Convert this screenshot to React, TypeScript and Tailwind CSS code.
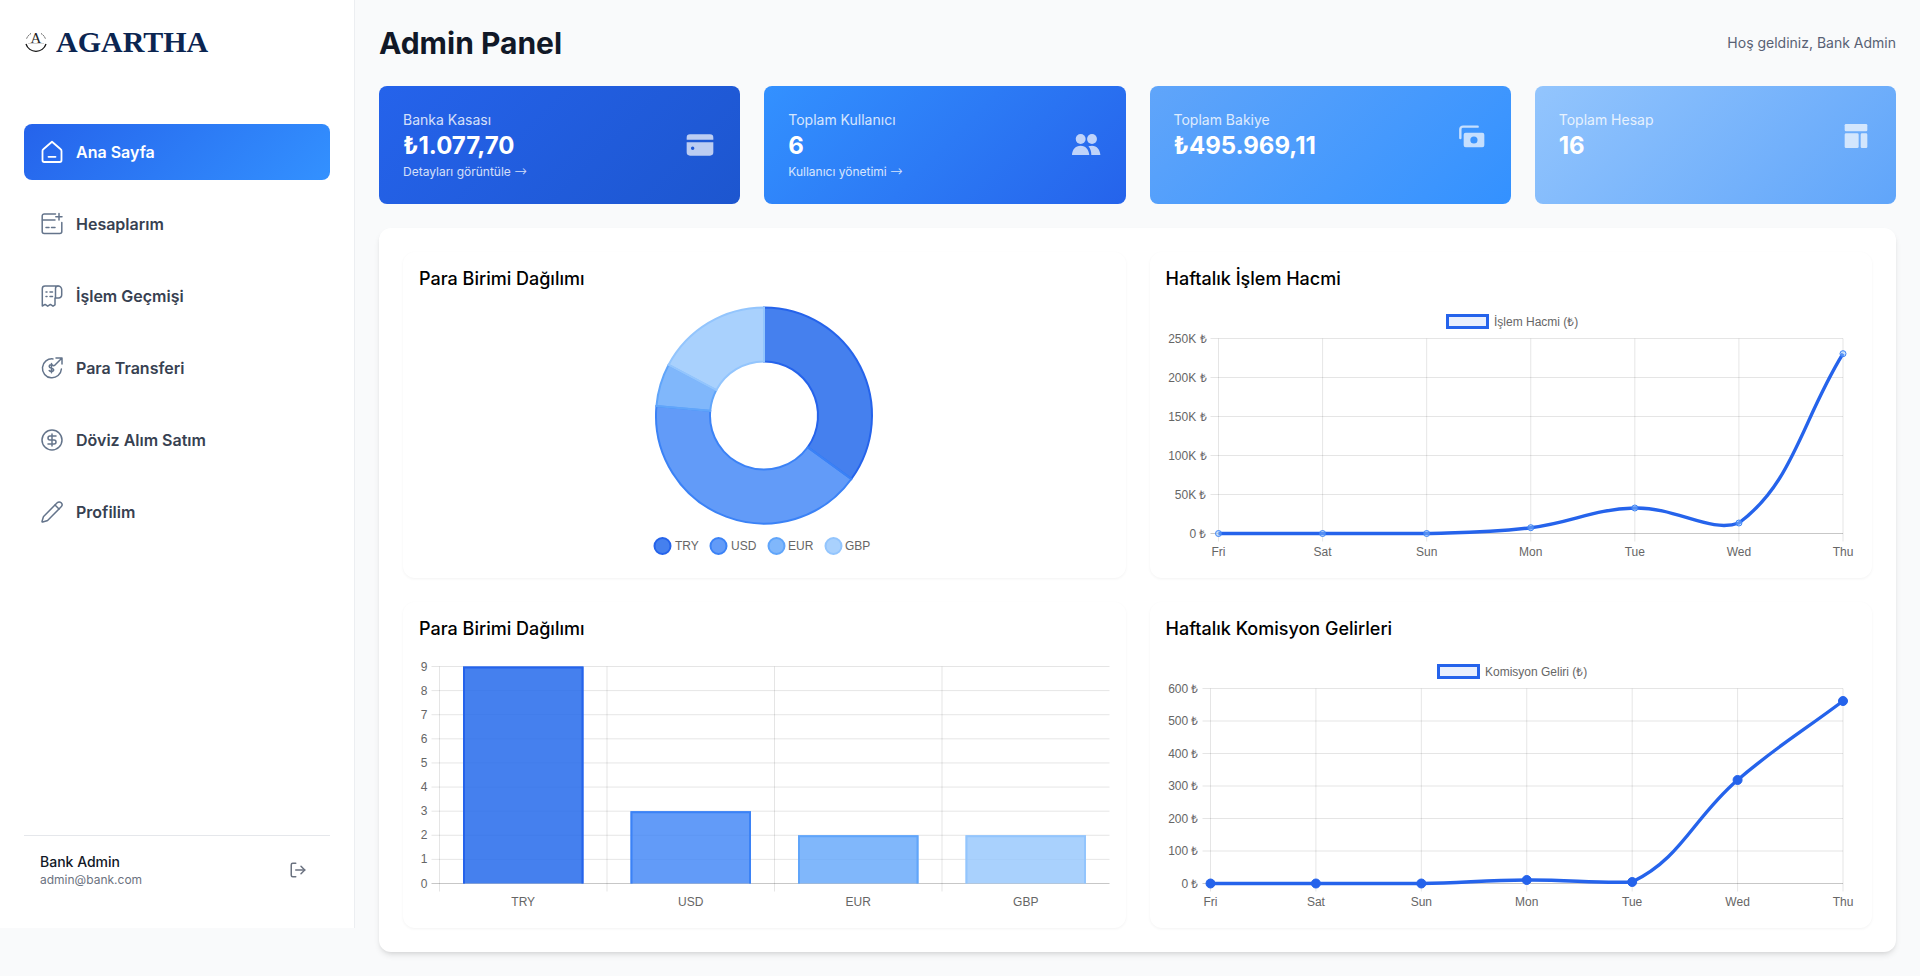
import React from "react";
import { CircleDollarSign, Pencil, LogOut } from "lucide-react";

type P = { x: number; y: number };

function spline(pts: P[], top: number, bottom: number, t = 0.4) {
  const cap = (v: number) => Math.min(bottom, Math.max(top, v));
  let d = `M${pts[0].x} ${pts[0].y}`;
  const ctrl = pts.map((p, i) => {
    const a = pts[i - 1] ?? p;
    const b = pts[i + 1] ?? p;
    const d01 = Math.hypot(p.x - a.x, p.y - a.y);
    const d12 = Math.hypot(b.x - p.x, b.y - p.y);
    const tot = d01 + d12 || 1;
    const fa = (t * d01) / tot;
    const fb = (t * d12) / tot;
    return {
      prev: { x: p.x - fa * (b.x - a.x), y: cap(p.y - fa * (b.y - a.y)) },
      next: { x: p.x + fb * (b.x - a.x), y: cap(p.y + fb * (b.y - a.y)) },
    };
  });
  for (let i = 1; i < pts.length; i++) {
    const c1 = ctrl[i - 1].next;
    const c2 = ctrl[i].prev;
    d += ` C${c1.x} ${c1.y} ${c2.x} ${c2.y} ${pts[i].x} ${pts[i].y}`;
  }
  return d;
}

const GRID = "rgba(0,0,0,0.1)";
const LABEL = "#666666";
const FONT = "'Liberation Sans', Arial, sans-serif";

function ChartText(props: React.SVGProps<SVGTextElement>) {
  return <text fontFamily={FONT} fontSize={12} fill={LABEL} dominantBaseline="central" {...props} />;
}

const days = ["Fri", "Sat", "Sun", "Mon", "Tue", "Wed", "Thu"];

function LineChart({
  legend,
  legendX,
  left,
  ticks,
  ys,
  pointR,
  hollow,
}: {
  legend: string;
  legendX: number;
  left: number;
  ticks: string[];
  ys: number[];
  pointR: number;
  hollow: boolean;
}) {
  const right = 677;
  const top = 32.5;
  const bottom = 227.5;
  const n = ticks.length - 1;
  const step = (right - left) / 6;
  const pts = ys.map((y, i) => ({ x: left + i * step, y }));
  return (
    <svg width={690} height={256} className="block overflow-visible">
      <rect x={legendX + 1.5} y={9.5} width={40} height={12} fill="rgba(37,99,235,0.1)" stroke="#2563eb" strokeWidth={3} />
      <ChartText x={legendX + 48} y={16}>
        {legend}
      </ChartText>
      {ticks.map((t, i) => {
        const y = top + ((bottom - top) * i) / n;
        return (
          <g key={t}>
            <line x1={left - 8} x2={right} y1={y} y2={y} stroke={i === n ? "rgba(0,0,0,0.22)" : GRID} />
            <ChartText x={left - 12} y={y} textAnchor="end">
              {t}
            </ChartText>
          </g>
        );
      })}
      {days.map((d, i) => {
        const x = left + i * step;
        return (
          <g key={d}>
            <line x1={x} x2={x} y1={top} y2={bottom + 8} stroke={GRID} />
            <ChartText x={x} y={246} textAnchor="middle">
              {d}
            </ChartText>
          </g>
        );
      })}
      <path d={spline(pts, top, bottom)} fill="none" stroke="#2563eb" strokeWidth={3.4} />
      {pts.map((p, i) => (
        <circle
          key={i}
          cx={p.x}
          cy={p.y}
          r={pointR}
          fill={hollow ? "rgba(147,197,253,0.45)" : "#2563eb"}
          stroke={hollow ? "#3b82f6" : "#2563eb"}
          strokeWidth={1}
        />
      ))}
    </svg>
  );
}

function polar(a: number, r: number) {
  const rad = ((a - 90) * Math.PI) / 180;
  return { x: 345 + r * Math.cos(rad), y: 109.5 + r * Math.sin(rad) };
}

function seg(a0: number, a1: number, R: number, r: number) {
  const large = a1 - a0 > 180 ? 1 : 0;
  const p0 = polar(a0, R);
  const p1 = polar(a1, R);
  const p2 = polar(a1, r);
  const p3 = polar(a0, r);
  return `M${p0.x} ${p0.y} A${R} ${R} 0 ${large} 1 ${p1.x} ${p1.y} L${p2.x} ${p2.y} A${r} ${r} 0 ${large} 0 ${p3.x} ${p3.y} Z`;
}

const series = [
  { name: "TRY", fill: "rgba(37,106,235,0.85)", border: "#2563eb", from: 0, to: 126, cx: 243.5, tx: 256 },
  { name: "USD", fill: "rgba(59,130,246,0.8)", border: "#3b82f6", from: 126, to: 275, cx: 299.5, tx: 312 },
  { name: "EUR", fill: "rgba(96,165,250,0.8)", border: "#60a5fa", from: 275, to: 298, cx: 357.5, tx: 369 },
  { name: "GBP", fill: "rgba(147,197,253,0.8)", border: "#93c5fd", from: 298, to: 360, cx: 414.5, tx: 426 },
];

function Donut() {
  return (
    <svg width={690} height={256} className="block overflow-visible">
      {series.map((s) => (
        <path key={s.name} d={seg(s.from, s.to, 108, 54)} fill={s.fill} stroke={s.border} strokeWidth={2} />
      ))}
      {series.map((s) => (
        <g key={s.name}>
          <circle cx={s.cx} cy={240} r={8} fill={s.fill} stroke={s.border} strokeWidth={2} />
          <ChartText x={s.tx} y={240}>
            {s.name}
          </ChartText>
        </g>
      ))}
    </svg>
  );
}

function BarChart() {
  const left = 20.5;
  const right = 690.5;
  const top = 10.5;
  const bottom = 227.5;
  const vals = [9, 3, 2, 2];
  const step = (right - left) / 4;
  const unit = (bottom - top) / 9;
  return (
    <svg width={690} height={256} className="block overflow-visible">
      {[9, 8, 7, 6, 5, 4, 3, 2, 1, 0].map((v) => {
        const y = bottom - v * unit;
        return (
          <g key={v}>
            <line x1={left - 8} x2={right} y1={y} y2={y} stroke={v === 0 ? "rgba(0,0,0,0.22)" : GRID} />
            <ChartText x={left - 12} y={y} textAnchor="end">
              {v}
            </ChartText>
          </g>
        );
      })}
      {[0, 1, 2, 3].map((i) => {
        const x = left + i * step;
        return <line key={i} x1={x} x2={x} y1={top} y2={bottom + 8} stroke={GRID} />;
      })}
      {series.map((s, i) => {
        const cx = left + (i + 0.5) * step;
        const h = vals[i] * unit;
        return (
          <g key={s.name}>
            <rect x={cx - 60.25} y={bottom - h} width={120.5} height={h} fill={s.fill} />
            <path
              d={`M${cx - 59.25} ${bottom} V${bottom - h + 1} H${cx + 59.25} V${bottom}`}
              fill="none"
              stroke={s.border}
              strokeWidth={2}
            />
            <ChartText x={cx} y={246} textAnchor="middle">
              {s.name}
            </ChartText>
          </g>
        );
      })}
    </svg>
  );
}

function Logo() {
  return (
    <svg width={24} height={24} viewBox="0 0 24 24" className="shrink-0">
      <path d="M7 3.5A10 10 0 0 0 2.5 9" fill="none" stroke="#333" strokeWidth={0.9} strokeDasharray="1.5 .7" />
      <path d="M17 3.5A10 10 0 0 1 21.5 9" fill="none" stroke="#333" strokeWidth={0.9} strokeDasharray="1.5 .7" />
      <path d="M2 14A10.5 10.5 0 0 0 22 14" fill="none" stroke="#111" strokeWidth={1.3} />
      <path d="M4.5 13.5h15" stroke="#888" strokeWidth={0.8} strokeDasharray="1 1" />
      <text x={12} y={13} textAnchor="middle" fontSize={15} fontFamily="'Liberation Serif', serif" fill="#222">
        A
      </text>
    </svg>
  );
}

const s = { fill: "none", stroke: "currentColor", strokeWidth: 1.5, strokeLinecap: "round" as const, strokeLinejoin: "round" as const };

function HomeIcon() {
  return (
    <svg width={24} height={24} viewBox="0 0 24 24" {...s} strokeWidth={1.8}>
      <path d="M12 1.8 3.300 9.300c-.5.4-.8 1-.8 1.600V20.300a1.700 1.700 0 0 0 1.700 1.700h15.600a1.700 1.700 0 0 0 1.700-1.700v-9.400c0-.6-.3-1.200-.8-1.600L12 1.800Z" />
      <path d="M8.500 16.800h7" />
    </svg>
  );
}
function CardPlus() {
  return (
    <svg width={24} height={24} viewBox="0 0 24 24" {...s}>
      <path d="M15.500 2H4.200a2 2 0 0 0-2 2v15.500a2 2 0 0 0 2 2h15.600a2 2 0 0 0 2-2V10.500" />
      <path d="M2.500 8H15" />
      <path d="M19 1.500v6.500M15.800 4.700h6.200" />
      <path d="M6 15.500h3M11.500 15.500h3.500" />
    </svg>
  );
}
function ReceiptIcon() {
  return (
    <svg width={24} height={24} viewBox="0 0 24 24" {...s}>
      <path d="M15.500 14V4.500a2.500 2.500 0 0 1 2.500-2.500H5a2.700 2.700 0 0 0-2.700 2.700V22l2.800-1.600 2.600 1.800 2.700-1.800 2.600 1.800 2-1.400V14" />
      <path d="M18 2a3.500 3.500 0 0 1 3.700 3.500V11a3 3 0 0 1-3 3h-3.200" />
      <path d="M6 8h1M10 8h2.500M6 12.500h1M10 12.500h2.500" />
    </svg>
  );
}
function TransferIcon() {
  return (
    <svg width={24} height={24} viewBox="0 0 24 24" {...s}>
      <path d="M13 2.900A9.500 9.500 0 1 0 21.400 13" />
      <path d="M14.500 9.500 21.500 2.500M16 2h6v6" />
      <path d="M13.400 9.700c-.5-.6-1.200-.9-2-.9-1.300 0-2.200.7-2.200 1.700 0 2.300 4.500 1.100 4.500 3.300 0 1-.9 1.700-2.300 1.700-.9 0-1.700-.4-2.200-1M11.500 7.500v9.300" />
    </svg>
  );
}

function CardIcon() {
  return (
    <svg width={32} height={32} viewBox="0 0 24 24" fill="currentColor">
      <path d="M2 6.500A2.500 2.500 0 0 1 4.500 4h15A2.500 2.500 0 0 1 22 6.500V8H2V6.500Z" />
      <path d="M2 10h20v7.500a2.500 2.500 0 0 1-2.500 2.500h-15A2.500 2.500 0 0 1 2 17.500V10Zm3.200 4.500a1.300 1.300 0 1 0 2.600 0 1.300 1.300 0 0 0-2.600 0Z" fillRule="evenodd" />
    </svg>
  );
}
function UsersIcon() {
  return (
    <svg width={32} height={32} viewBox="0 0 24 24" fill="currentColor">
      <circle cx={8} cy={7.500} r={3.700} />
      <circle cx={16.500} cy={7.500} r={3.700} />
      <path d="M1.500 19.500c0-4 2.500-7 6.500-7s6 3 6.500 7h-13Z" />
      <path d="M16 19.500c0-2.600-.7-4.800-2.200-6.500.8-.4 1.700-.5 2.700-.5 3.800 0 6 3 6.300 7H16Z" />
    </svg>
  );
}
function CashIcon() {
  return (
    <svg width={32} height={32} viewBox="0 0 24 24" fill="currentColor">
      <path d="M8 9.500h12.500a1.500 1.500 0 0 1 1.500 1.500v8a1.500 1.500 0 0 1-1.500 1.500H8A1.500 1.500 0 0 1 6.500 19v-8A1.500 1.500 0 0 1 8 9.500Zm6.200 2.800a2.700 2.700 0 1 0 0 5.400 2.700 2.700 0 0 0 0-5.400Z" fillRule="evenodd" />
      <path d="M4 13.500V7a2 2 0 0 1 2-2h11" fill="none" stroke="currentColor" strokeWidth={1.800} strokeLinecap="round" />
    </svg>
  );
}
function LayoutIcon() {
  return (
    <svg width={32} height={32} viewBox="0 0 24 24" fill="currentColor">
      <rect x={3.500} y={3} width={17} height={5.500} rx={1} />
      <rect x={3.500} y={10} width={10.500} height={11} rx={1} />
      <rect x={15.500} y={10} width={5} height={11} rx={1} />
    </svg>
  );
}

const nav = [
  { label: "Ana Sayfa", icon: <HomeIcon />, active: true },
  { label: "Hesaplarım", icon: <CardPlus /> },
  { label: "İşlem Geçmişi", icon: <ReceiptIcon /> },
  { label: "Para Transferi", icon: <TransferIcon /> },
  { label: "Döviz Alım Satım", icon: <CircleDollarSign size={24} strokeWidth={1.5} /> },
  { label: "Profilim", icon: <Pencil size={24} strokeWidth={1.5} /> },
];

function StatCard({
  label,
  value,
  link,
  icon,
  bg,
}: {
  label: string;
  value: string;
  link?: string;
  icon: React.ReactNode;
  bg: string;
}) {
  return (
    <div className={`rounded-lg p-6 text-white ${bg}`}>
      <div className="flex items-center justify-between">
        <div>
          <p className="text-sm leading-5 opacity-80">{label}</p>
          <p className="text-2xl leading-8 font-bold">{value}</p>
          {link && (
            <p className="text-xs leading-4 mt-0.5 opacity-80">
              {link} <span className="text-[15px] leading-none font-['DejaVu_Sans',sans-serif] font-extralight">→</span>
            </p>
          )}
        </div>
        <div className="opacity-70">{icon}</div>
      </div>
    </div>
  );
}

function ChartCard({ title, children }: { title: string; children: React.ReactNode }) {
  return (
    <div className="rounded-xl bg-white shadow-[0_1px_3px_rgba(0,0,0,0.05)] px-4 pt-[13px] pb-4 min-w-0">
      <h3 className="text-lg leading-7 font-medium text-black mb-[13px]">{title}</h3>
      {children}
    </div>
  );
}

export default function App() {
  return (
    <div className="flex min-h-screen bg-[#f9fafb] font-[Inter,sans-serif]">
      <aside className="w-[355px] h-[928px] shrink-0 bg-white border-r border-[#eceef1] p-6 pb-0 flex flex-col">
        <div className="h-9 mb-16 flex items-center gap-2">
          <Logo />
          <span className="text-[30px] leading-9 font-bold text-[#0b2551] font-['Liberation_Serif',serif]">AGARTHA</span>
        </div>
        <nav className="flex flex-col gap-4">
          {nav.map((n) => (
            <div
              key={n.label}
              className={
                n.active
                  ? "flex items-center gap-3 px-4 py-4 rounded-lg text-white font-semibold bg-[linear-gradient(135deg,#2563eb,#3391ff)]"
                  : "flex items-center gap-3 px-4 py-4 rounded-lg text-[#374151] font-semibold"
              }
            >
              <span className={n.active ? "text-white" : "text-[#64748b]"}>{n.icon}</span>
              <span className="leading-6">{n.label}</span>
            </div>
          ))}
        </nav>
        <div className="mt-auto mb-10 border-t border-[#e5e7eb] pt-4 px-4 flex items-center justify-between">
          <div>
            <p className="text-sm leading-5 font-medium text-[#111827]">Bank Admin</p>
            <p className="text-xs leading-4 text-[#6b7280]">admin@bank.com</p>
          </div>
          <LogOut size={18} className="text-[#6b7280] mr-[7px]" strokeWidth={2} />
        </div>
      </aside>
      <main className="flex-1 min-w-0 p-6">
        <header className="flex items-center justify-between mb-6">
          <h1 className="text-3xl leading-[38px] font-bold text-[#111827]">Admin Panel</h1>
          <p className="text-sm text-[#586174]">Hoş geldiniz, Bank Admin</p>
        </header>
        <section className="grid grid-cols-4 gap-6 mb-6">
          <StatCard label="Banka Kasası" value="₺1.077,70" link="Detayları görüntüle" icon={<CardIcon />} bg="bg-[linear-gradient(135deg,#2563eb,#1d56cf)]" />
          <StatCard label="Toplam Kullanıcı" value="6" link="Kullanıcı yönetimi" icon={<UsersIcon />} bg="bg-[linear-gradient(135deg,#3391ff,#2563eb)]" />
          <StatCard label="Toplam Bakiye" value="₺495.969,11" icon={<CashIcon />} bg="bg-[linear-gradient(135deg,#60a5fa,#3391ff)]" />
          <StatCard label="Toplam Hesap" value="16" icon={<LayoutIcon />} bg="bg-[linear-gradient(135deg,#93c5fd,#60a5fa)]" />
        </section>
        <section className="rounded-xl bg-white shadow-md p-6 grid grid-cols-2 gap-6">
          <ChartCard title="Para Birimi Dağılımı">
            <Donut />
          </ChartCard>
          <ChartCard title="Haftalık İşlem Hacmi">
            <LineChart
              legend="İşlem Hacmi (₺)"
              legendX={280}
              left={52.5}
              ticks={["250K ₺", "200K ₺", "150K ₺", "100K ₺", "50K ₺", "0 ₺"]}
              ys={[227.5, 227.5, 227.5, 221.7, 202, 217, 47.7]}
              pointR={3}
              hollow
            />
          </ChartCard>
          <ChartCard title="Para Birimi Dağılımı">
            <BarChart />
          </ChartCard>
          <ChartCard title="Haftalık Komisyon Gelirleri">
            <LineChart
              legend="Komisyon Geliri (₺)"
              legendX={271}
              left={44.5}
              ticks={["600 ₺", "500 ₺", "400 ₺", "300 ₺", "200 ₺", "100 ₺", "0 ₺"]}
              ys={[227.5, 227.5, 227.5, 224, 226, 124, 45]}
              pointR={4.5}
              hollow={false}
            />
          </ChartCard>
        </section>
      </main>
    </div>
  );
}
